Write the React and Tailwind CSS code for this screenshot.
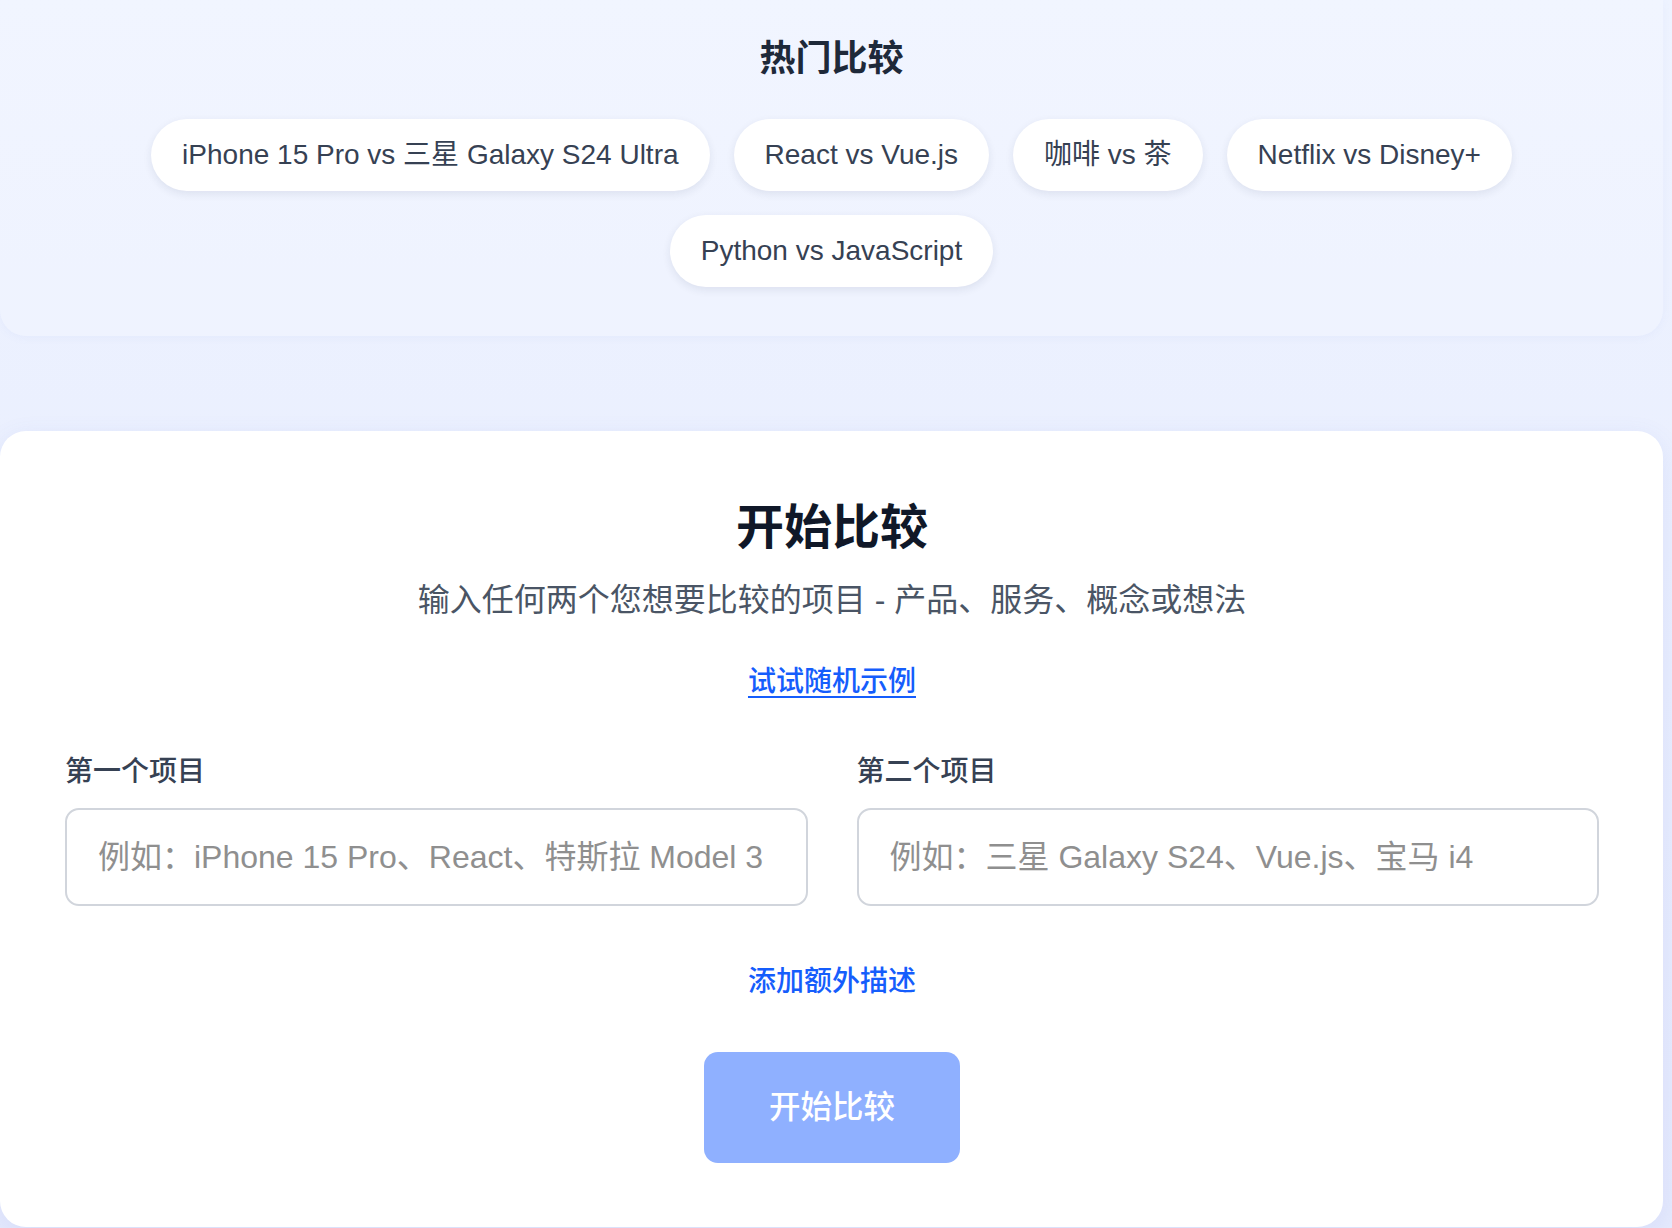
import React from "react";

const FONT = { fontFamily: '"Liberation Sans", "Noto Sans CJK SC", sans-serif' };

const pills = [
  "iPhone 15 Pro vs 三星 Galaxy S24 Ultra",
  "React vs Vue.js",
  "咖啡 vs 茶",
  "Netflix vs Disney+",
  "Python vs JavaScript",
];

export default function App() {
  return (
    <div
      className="min-h-[1228px] w-[1672px] bg-gradient-to-b from-[#eef3ff] to-[#e5eafd] pr-[9px] text-gray-700"
      style={FONT}
    >
      <section className="rounded-b-[26px] bg-white/20 pt-[34px] pb-[49px] px-[60px] shadow-[0_2px_8px_rgba(120,140,220,0.06)]">
        <h2 className="text-center text-[36px] leading-[50px] font-bold text-[#1e2939]">热门比较</h2>
        <div className="mt-[35px] flex flex-wrap justify-center gap-x-[24px] gap-y-[24px]">
          {pills.map((p) => (
            <button
              key={p}
              className="h-[72px] rounded-full bg-white px-[31px] text-[28px] leading-[72px] text-[#364153] shadow-[0_3px_8px_rgba(30,41,80,0.09)]"
            >
              {p}
            </button>
          ))}
        </div>
      </section>

      <section className="mt-[95px] rounded-[26px] bg-white pt-[66px] pb-[64px] pl-[65px] pr-[64px] shadow-[0_6px_24px_rgba(90,110,220,0.10)]">
        <h1 className="text-center text-[48px] leading-[62px] font-bold text-[#101828]">开始比较</h1>
        <p className="mt-[18px] text-center text-[32px] leading-[47px] text-[#4a5565]">
          输入任何两个您想要比较的项目 - 产品、服务、概念或想法
        </p>
        <div className="mt-[37px] text-center">
          <a className="text-[28px] leading-[42px] font-medium text-[#155dfc] underline underline-offset-[5px] decoration-[2px]">
            试试随机示例
          </a>
        </div>

        <div className="mt-[48px] grid grid-cols-2 gap-x-[49px]">
          <div>
            <label className="block text-[28px] leading-[42px] font-medium text-[#364153]">第一个项目</label>
            <input
              className="mt-[15px] block h-[98px] w-full rounded-[14px] border-2 border-[#d1d5dc] bg-white px-[31px] text-[32px] text-gray-800 outline-none placeholder:text-[#8f8f8f]"
              style={FONT}
              placeholder="例如：iPhone 15 Pro、React、特斯拉 Model 3"
            />
          </div>
          <div>
            <label className="block text-[28px] leading-[42px] font-medium text-[#364153]">第二个项目</label>
            <input
              className="mt-[15px] block h-[98px] w-full rounded-[14px] border-2 border-[#d1d5dc] bg-white px-[31px] text-[32px] text-gray-800 outline-none placeholder:text-[#8f8f8f]"
              style={FONT}
              placeholder="例如：三星 Galaxy S24、Vue.js、宝马 i4"
            />
          </div>
        </div>

        <div className="mt-[55px] text-center">
          <button className="text-[28px] leading-[42px] font-medium text-[#155dfc]">添加额外描述</button>
        </div>

        <div className="mt-[49px] flex justify-center">
          <button className="h-[111px] w-[256px] rounded-[14px] bg-[#8fb0ff] text-[31.5px] font-medium text-white">
            开始比较
          </button>
        </div>
      </section>
    </div>
  );
}
